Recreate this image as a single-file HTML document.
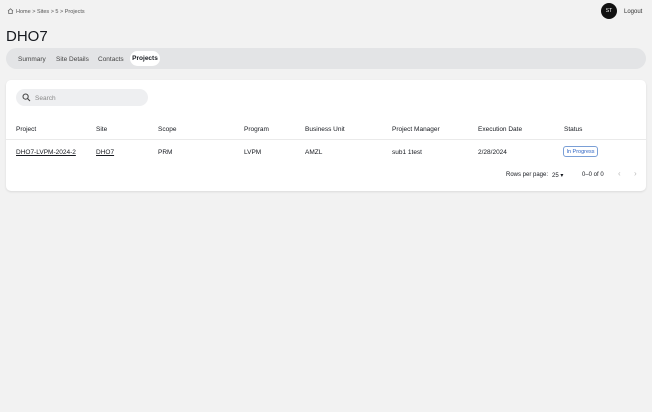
<!DOCTYPE html>
<html><head><style>
body{margin:0;width:652px;height:412px;background:#f2f2f2;font-family:"Liberation Sans",sans-serif;color:#16191f;position:relative;overflow:hidden}
.a{position:absolute;white-space:nowrap}
.s{font-size:6.5px}
</style></head><body>
<svg class="a" style="left:7px;top:8px" width="7" height="6" viewBox="0 0 7 6"><path d="M1 3 L3.5 0.8 L6 3 M1.7 2.5 V5.5 H5.3 V2.5" fill="none" stroke="#666" stroke-width="0.8"/></svg>
<div class="a" style="left:16px;top:9px;font-size:5.5px;color:#555">Home &gt; Sites &gt; 5 &gt; Projects</div>
<div class="a" style="left:601px;top:3px;width:16px;height:16px;border-radius:50%;background:#111;color:#fff;font-size:5px;text-align:center;line-height:16px">ST</div>
<div class="a" style="left:624px;top:9px;font-size:6px;color:#333">Logout</div>
<div class="a" style="left:6px;top:28px;font-size:15px">DHO7</div>
<div class="a" style="left:6px;top:48px;width:640px;height:21px;border-radius:11px;background:#e3e4e6"></div>
<div class="a s" style="left:18px;top:56px;color:#444">Summary</div>
<div class="a s" style="left:56px;top:56px;color:#444">Site Details</div>
<div class="a s" style="left:98px;top:56px;color:#444">Contacts</div>
<div class="a s" style="left:130px;top:51px;width:30px;height:15px;border-radius:8px;background:#fff;text-align:center;line-height:16px;font-weight:bold">Projects</div>
<div class="a" style="left:6px;top:80px;width:640px;height:111px;border-radius:5px;background:#fff;box-shadow:0 1px 2px rgba(0,0,0,.1)"></div>
<div class="a" style="left:16px;top:89px;width:132px;height:17px;border-radius:9px;background:#eeeff1"></div>
<svg class="a" style="left:22px;top:93px" width="9" height="9" viewBox="0 0 9 9"><circle cx="3.6" cy="3.6" r="2.6" fill="none" stroke="#444" stroke-width="1"/><path d="M5.5 5.5 L8 8" stroke="#444" stroke-width="1.1"/></svg>
<div class="a" style="left:35px;top:95px;font-size:6.5px;color:#888">Search</div>
<div class="a s" style="left:16px;top:126px">Project</div>
<div class="a s" style="left:96px;top:126px">Site</div>
<div class="a s" style="left:158px;top:126px">Scope</div>
<div class="a s" style="left:244px;top:126px">Program</div>
<div class="a s" style="left:305px;top:126px">Business Unit</div>
<div class="a s" style="left:392px;top:126px">Project Manager</div>
<div class="a s" style="left:478px;top:126px">Execution Date</div>
<div class="a s" style="left:564px;top:126px">Status</div>
<div class="a" style="left:6px;top:139px;width:640px;height:1px;background:#eaeaea"></div>
<div class="a s" style="left:16px;top:149px;text-decoration:underline">DHO7-LVPM-2024-2</div>
<div class="a s" style="left:96px;top:149px;text-decoration:underline">DHO7</div>
<div class="a s" style="left:158px;top:149px">PRM</div>
<div class="a s" style="left:244px;top:149px">LVPM</div>
<div class="a s" style="left:305px;top:149px">AMZL</div>
<div class="a s" style="left:392px;top:149px">sub1 1test</div>
<div class="a s" style="left:478px;top:149px">2/28/2024</div>
<div class="a" style="left:563px;top:146px;width:33px;height:9px;border:1px solid #7a9fd6;border-radius:3px;color:#2f65c4;font-size:5.5px;text-align:center;line-height:10px">In Progress</div>
<div class="a" style="left:506px;top:172px;font-size:6px">Rows per page:</div>
<div class="a" style="left:552px;top:172px;font-size:6px">25 ▾</div>
<div class="a" style="left:582px;top:172px;font-size:6px">0–0 of 0</div>
<div class="a" style="left:618px;top:169px;font-size:8px;color:#bbb">‹</div>
<div class="a" style="left:634px;top:169px;font-size:8px;color:#bbb">›</div>
</body></html>
